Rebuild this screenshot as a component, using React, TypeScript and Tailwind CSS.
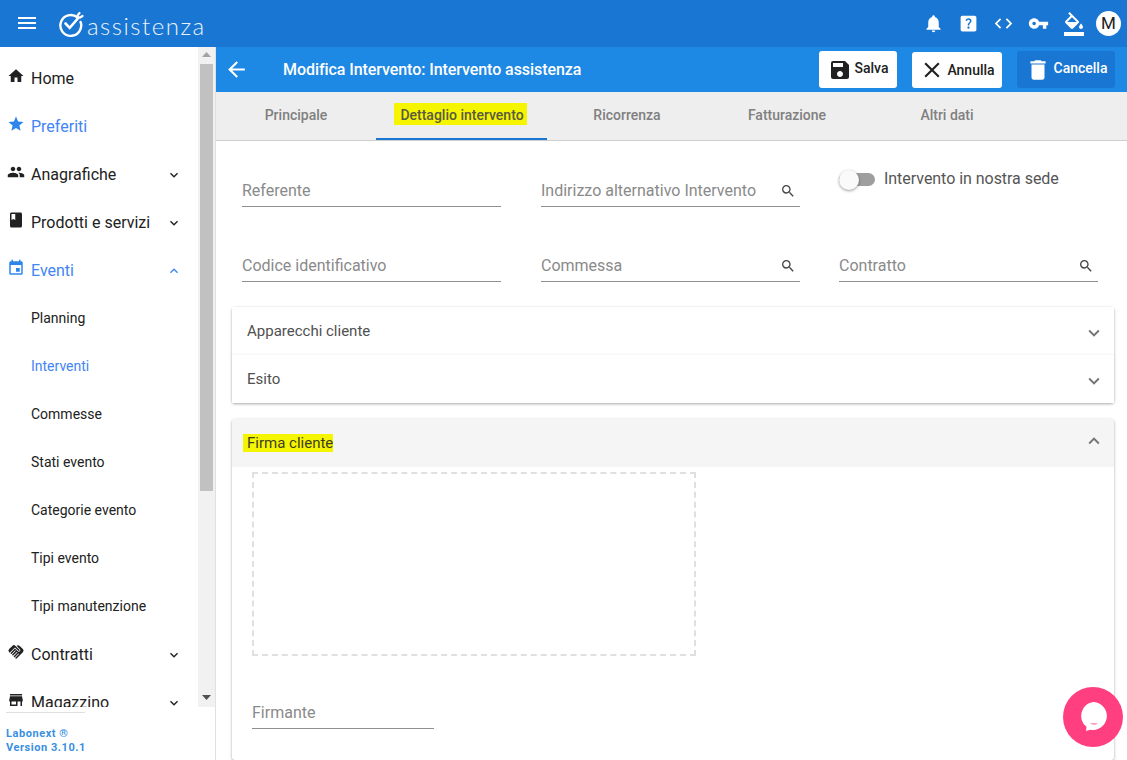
import React from "react";
import {
  MdMenu, MdHome, MdStar, MdPeople, MdBook, MdEvent, MdExpandMore, MdExpandLess, MdHandshake, MdStore,
  MdArrowBack, MdSave, MdClose, MdDelete, MdSearch, MdNotifications, MdHelpCenter, MdCode, MdVpnKey, MdFormatColorFill,
} from "react-icons/md";

const font = { fontFamily: "Roboto, sans-serif" };

function NavRow({ icon, label, active, chevron }: { icon: React.ReactNode; label: string; active?: boolean; chevron?: "up" | "down" }) {
  return (
    <div className={`flex h-12 shrink-0 items-center pl-[7px] pr-[16px] text-base ${active ? "text-[#4285f4]" : "text-[#212121]"}`}>
      <span className={`flex w-[24px] -translate-y-[2px] items-center text-[18px] ${active ? "text-[#2f86ea]" : "text-[#212121]"}`}>{icon}</span>
      <span className="flex-1 translate-y-[1px]">{label}</span>
      {chevron === "down" && <MdExpandMore className="translate-y-[1px] text-[16px]" />}
      {chevron === "up" && <MdExpandLess className="translate-y-[1px] text-[16px]" />}
    </div>
  );
}

function SubRow({ label, active }: { label: string; active?: boolean }) {
  return <div className={`flex h-12 shrink-0 items-center pl-[31px] text-sm ${active ? "text-[#4285f4]" : "text-[#212121]"}`}>{label}</div>;
}

function Sidebar() {
  return (
    <aside className="flex w-[216px] shrink-0 flex-col border-r border-[#e0e0e0] bg-white">
      <div className="flex h-[660px] shrink-0">
        <nav className="flex flex-1 flex-col overflow-hidden pt-[7px]">
          <NavRow icon={<MdHome />} label="Home" />
          <NavRow icon={<MdStar />} label="Preferiti" active />
          <NavRow icon={<MdPeople />} label="Anagrafiche" chevron="down" />
          <NavRow icon={<MdBook />} label="Prodotti e servizi" chevron="down" />
          <NavRow icon={<MdEvent />} label="Eventi" active chevron="up" />
          <SubRow label="Planning" />
          <SubRow label="Interventi" active />
          <SubRow label="Commesse" />
          <SubRow label="Stati evento" />
          <SubRow label="Categorie evento" />
          <SubRow label="Tipi evento" />
          <SubRow label="Tipi manutenzione" />
          <NavRow icon={<MdHandshake />} label="Contratti" chevron="down" />
          <NavRow icon={<MdStore />} label="Magazzino" chevron="down" />
        </nav>
        <div className="flex w-[17px] shrink-0 flex-col items-center bg-[#f1f1f1]">
          <svg className="mt-[5px] h-[5px] w-[9px]" viewBox="0 0 9 5"><path d="M4.5 0 9 5H0z" fill="#a3a3a3" /></svg>
          <div className="mt-[7px] h-[427px] w-[13px] bg-[#c1c1c1]" />
          <div className="flex-1" />
          <svg className="mb-[7px] h-[5px] w-[9px]" viewBox="0 0 9 5"><path d="M0 0h9L4.5 5z" fill="#505050" /></svg>
        </div>
      </div>
      <div className="px-[6px] pt-[5px]">
        <div className="h-[1px] w-[79px] bg-[#e0e0e0]" />
        <div className="mt-[14px] text-[11px] font-bold leading-[14px] tracking-[0.55px] text-[#3a8fe0]">
          Labonext ®<br />Version 3.10.1
        </div>
      </div>
    </aside>
  );
}

function TopBar() {
  return (
    <header className="flex h-[47px] shrink-0 items-center bg-[#1976d2] pr-[6px] text-white">
      <MdMenu className="ml-[15px] -translate-y-[1px] text-[24px]" />
      <svg className="ml-[19px] h-[26px] w-[26px]" viewBox="0 0 26 26" fill="none" stroke="#fff" strokeWidth="2.4" strokeLinecap="round">
        <path d="M19.5 6.5A10.4 10.4 0 1 0 22.6 11" />
        <path d="M7.5 12.5l4.2 4.4 9-10.4" strokeWidth="2.6" />
        <path d="M19.5 4.5l2-2.5M22 6.5l2.5-1.5" strokeWidth="2.2" />
      </svg>
      <span className="ml-[3px] translate-y-[2px] text-[24px] font-light leading-none tracking-[1.5px] text-[#eaf3fb]" style={{ fontFamily: "Lato, sans-serif" }}>assistenza</span>
      <div className="flex-1" />
      <div className="flex items-center gap-[14px] text-[21px]">
        <MdNotifications />
        <MdHelpCenter />
        <MdCode />
        <MdVpnKey />
        <MdFormatColorFill className="-ml-[1px] text-[24px]" />
      </div>
      <div className="ml-[10px] flex h-[25px] w-[25px] items-center justify-center rounded-full bg-white text-[17px] text-[#212121]">M</div>
    </header>
  );
}

function ActionBar() {
  return (
    <div className="flex h-[45px] shrink-0 items-center bg-[#1e88e5] pl-[8px] pr-[12px] text-white">
      <MdArrowBack className="text-[25px]" />
      <div className="ml-[34px] flex-1 text-base font-medium tracking-[-0.07px]">Modifica Intervento: Intervento assistenza</div>
      <button className="flex h-[37px] w-[78px] items-center justify-center gap-[3px] rounded-[3px] bg-white text-sm font-medium text-[#212121]">
        <MdSave className="text-[24px]" /><span className="-translate-y-[2px]">Salva</span>
      </button>
      <button className="ml-[15px] flex h-[36px] w-[90px] items-center justify-center gap-[2px] rounded-[3px] bg-white text-sm font-medium text-[#212121]">
        <MdClose className="text-[26px]" />Annulla
      </button>
      <button className="ml-[15px] flex h-[37px] w-[98px] items-center justify-center gap-[3px] rounded-[3px] bg-[#1976d2] text-sm font-medium">
        <MdDelete className="text-[26px]" /><span className="-translate-y-[2px]">Cancella</span>
      </button>
    </div>
  );
}

function Tabs() {
  const tab = "flex w-[160px] items-center justify-center border-b-2 border-transparent";
  return (
    <div className="flex h-[49px] shrink-0 border-b border-[#cfcfcf] bg-[#eeeeee] text-sm font-medium text-[#808080]">
      <div className={tab}>Principale</div>
      <div className="flex w-[171px] items-center justify-center border-b-2 border-[#1976d2] text-[#5a5a40]">
        <span className="-translate-x-[1px] -translate-y-[1px] bg-[#f5f500] pl-[6px] pr-[3px] pt-[2px]">Dettaglio intervento</span>
      </div>
      <div className={tab}>Ricorrenza</div>
      <div className={tab}>Fatturazione</div>
      <div className={tab}>Altri dati</div>
    </div>
  );
}

function Field({ label, search }: { label: string; search?: boolean }) {
  return (
    <div className="flex h-[32px] w-[259px] items-center justify-between border-b border-[#8f8f8f] text-base text-[#8a8a8a]">
      <span>{label}</span>
      {search && <MdSearch className="mr-[4px] text-[16px] text-[#444]" />}
    </div>
  );
}

function AccordionHead({ label, open }: { label: string; open?: boolean }) {
  return (
    <div className={`flex h-12 items-center justify-between pl-[15px] pr-[9px] text-[15px] text-[#505050] ${open ? "bg-[#f5f5f5]" : "bg-white"}`}>
      {open ? <span className="-ml-[4px] bg-[#f5f500] pl-[4px] leading-[18px] text-[#3d3d20]">{label}</span> : <span>{label}</span>}
      {open ? <MdExpandLess className="-translate-y-[2px] text-[22px] text-[#757575]" /> : <MdExpandMore className="translate-y-[2px] text-[22px] text-[#757575]" />}
    </div>
  );
}

function Main() {
  return (
    <main className="flex min-w-0 flex-1 flex-col">
      <ActionBar />
      <Tabs />
      <div className="flex flex-1 flex-col overflow-hidden pl-[16px] pr-[13px] pt-[34px]">
        <div className="grid grid-cols-[299px_298px_259px] gap-y-[43px] pl-[10px]">
          <Field label="Referente" />
          <Field label="Indirizzo alternativo Intervento" search />
          <div className="flex h-[32px] items-start">
            <div className="relative h-[13px] w-[36px] -translate-y-[2px] rounded-full bg-[#9e9e9e]">
              <div className="absolute -top-[3.5px] left-[0px] h-[20px] w-[20px] rounded-full bg-[#fafafa] shadow-[0_1px_3px_rgba(0,0,0,0.4)]" />
            </div>
            <span className="ml-[9px] -mt-[8px] text-base leading-[24px] tracking-[-0.04px] text-[#555]">Intervento in nostra sede</span>
          </div>
          <Field label="Codice identificativo" />
          <Field label="Commessa" search />
          <Field label="Contratto" search />
        </div>
        <section className="mt-[25px] rounded-[3px] shadow-[0_1px_3px_rgba(0,0,0,0.35)]">
          <AccordionHead label="Apparecchi cliente" />
          <div className="shadow-[0_-1px_2px_rgba(0,0,0,0.05)]"><AccordionHead label="Esito" /></div>
        </section>
        <section className="mt-4 flex-1 rounded-[3px] bg-white shadow-[0_1px_3px_rgba(0,0,0,0.35)]">
          <AccordionHead label="Firma cliente" open />
          <div className="px-[20px] pt-[5px]">
            <div className="h-[184px] w-[444px] border-2 border-dashed border-[#e0e0e0]" />
            <div className="mt-[41px] flex h-[32px] w-[182px] items-center border-b border-[#8f8f8f] text-base text-[#8a8a8a]">Firmante</div>
          </div>
        </section>
      </div>
    </main>
  );
}

export default function App() {
  return (
    <div className="relative flex h-[760px] w-[1127px] flex-col overflow-hidden bg-white" style={font}>
      <TopBar />
      <div className="flex min-h-0 flex-1">
        <Sidebar />
        <Main />
      </div>
      <div className="absolute left-[1063px] top-[687px] flex h-[60px] w-[60px] items-center justify-center rounded-full bg-[#ff3f7f]">
        <svg width="32" height="34" viewBox="0 0 32 34">
          <path d="M16 2a14 14 0 1 1 -3 27.7L9 31l.5-4.2A14 14 0 0 1 16 2z" fill="#fff" />
          <path d="M13 23.5q4 2 8 0z" fill="#ff3f7f" />
        </svg>
      </div>
    </div>
  );
}
